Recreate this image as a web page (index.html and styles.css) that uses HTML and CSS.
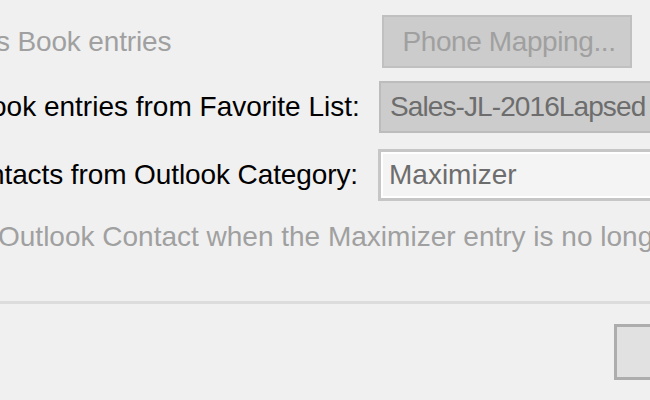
FILE: index.html
```html
<!DOCTYPE html>
<html>
<head>
<meta charset="utf-8">
<link rel="stylesheet" href="styles.css">
</head>
<body>
<div class="dialog">
  <div class="form">
    <div class="row row-sync">
      <span class="label disabled cut-s">s Book entries</span>
      <button class="btn-phone" disabled>Phone Mapping...</button>
    </div>
    <div class="row row-fav">
      <span class="label cut-ook">ook entries from Favorite List:</span>
      <div class="combo">Sales-JL-2016Lapsed</div>
    </div>
    <div class="row row-cat">
      <span class="label cut-ntacts">ntacts from Outlook Category:</span>
      <div class="textbox">Maximizer</div>
    </div>
    <div class="row-del">
      <span class="label disabled cut-outlook">Outlook Contact when the Maximizer entry is no longer in the list</span>
    </div>
  </div>
  <div class="separator"></div>
  <div class="footer">
    <button class="btn-ok">OK</button>
  </div>
</div>
</body>
</html>
```

FILE: styles.css
```css
html, body {
  margin: 0;
  padding: 0;
  width: 650px;
  height: 400px;
  overflow: hidden;
  background: #f0f0f0;
}

.dialog {
  font-family: "Liberation Sans", Arial, sans-serif;
  font-size: 28px;
  color: #000;
  white-space: nowrap;
  padding-top: 15px;
}

.form {
  display: flex;
  flex-direction: column;
}

.row {
  display: grid;
  grid-template-columns: 378px 1fr;
  align-items: center;
}

.label {
  display: block;
  line-height: 32px;
}

.disabled {
  color: #a0a0a0;
}

.cut-s { margin-left: -4px; letter-spacing: -0.15px; }
.cut-ook { margin-left: -9px; }
.cut-ntacts { margin-left: -11px; letter-spacing: -0.1px; }
.cut-outlook { margin-left: -2px; }

.row-sync {
  height: 53px;
}

.btn-phone {
  margin-left: 4px;
  width: 250px;
  height: 53px;
  box-sizing: border-box;
  background: #cccccc;
  border: 2px solid #c0c0c0;
  font-family: inherit;
  font-size: 28px;
  letter-spacing: -0.4px;
  color: #a0a0a0;
  padding: 0 0 0 4px;
  line-height: 1;
}

.row-fav {
  margin-top: 13px;
  height: 52px;
}

.combo {
  margin-left: 1px;
  width: 320px;
  height: 52px;
  box-sizing: border-box;
  background: #cccccc;
  border: 2px solid #bcbcbc;
  color: #6d6d6d;
  letter-spacing: -0.9px;
  padding-left: 9px;
  display: flex;
  align-items: center;
}

.row-cat {
  margin-top: 16px;
  height: 52px;
}

.textbox {
  width: 320px;
  height: 52px;
  box-sizing: border-box;
  background: #f4f4f4;
  border: 3px solid #c6c6c6;
  box-shadow: inset 0 0 0 2px #ffffff;
  color: #6d6d6d;
  padding-left: 8px;
  display: flex;
  align-items: center;
}

.row-del {
  height: 40px;
  margin-top: 16px;
  display: flex;
  align-items: center;
}

.separator {
  margin-top: 44px;
  height: 3px;
  background: #dcdcdc;
}

.footer {
  display: flex;
  padding-left: 614px;
  margin-top: 20px;
}

.btn-ok {
  flex: none;
  width: 150px;
  height: 56px;
  box-sizing: border-box;
  background: #e1e1e1;
  border: 3px solid #adadad;
  font-family: inherit;
  font-size: 28px;
  color: #000;
  padding: 0;
}
```
